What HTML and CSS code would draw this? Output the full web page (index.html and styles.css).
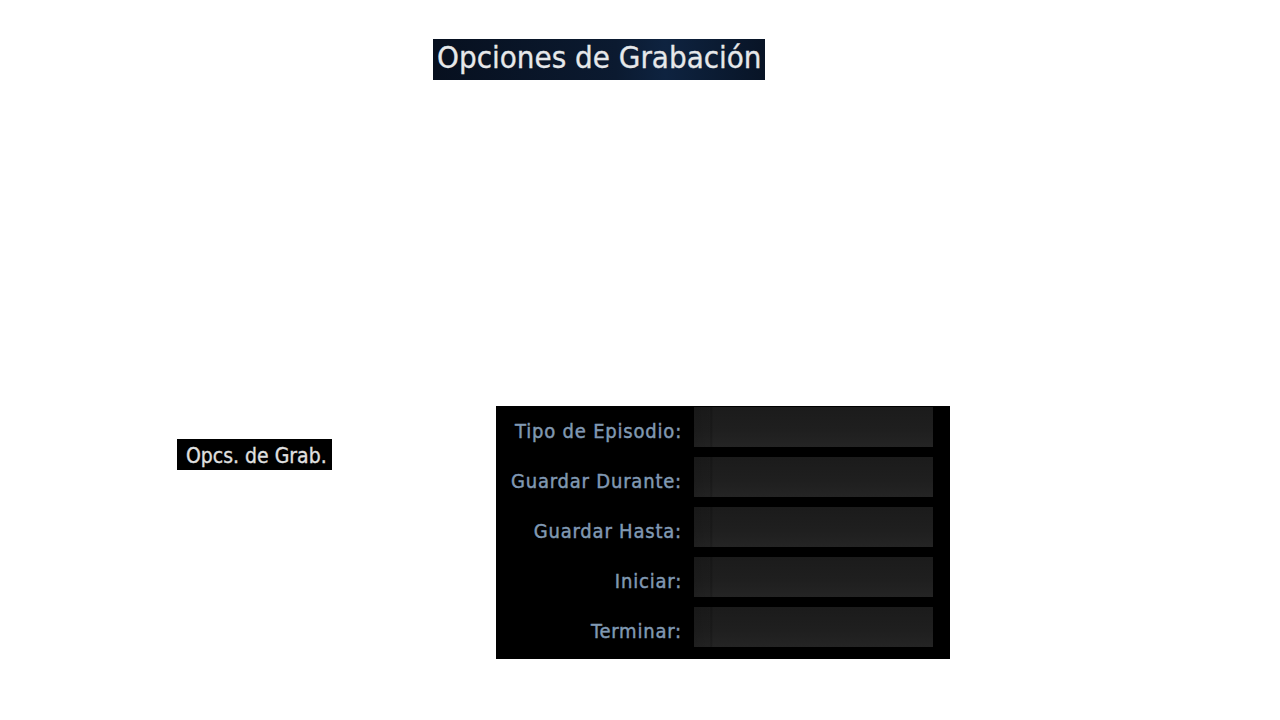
FILE: index.html
```html
<!DOCTYPE html>
<html lang="es">
<head>
<meta charset="utf-8">
<link rel="stylesheet" href="styles.css">
</head>
<body>
<div class="page">
  <div class="title-row">
    <div class="title">Opciones de Grabación</div>
  </div>
  <div class="bottom">
    <div class="short">Opcs. de Grab.</div>
    <div class="panel">
      <div class="row"><span class="label">Tipo de Episodio:</span><span class="field"></span></div>
      <div class="row"><span class="label">Guardar Durante:</span><span class="field"></span></div>
      <div class="row"><span class="label">Guardar Hasta:</span><span class="field"></span></div>
      <div class="row"><span class="label">Iniciar:</span><span class="field"></span></div>
      <div class="row"><span class="label">Terminar:</span><span class="field"></span></div>
    </div>
  </div>
</div>
</body>
</html>
```
FILE: styles.css
```css
html, body {
  margin: 0;
  padding: 0;
  background: #ffffff;
  width: 1280px;
  height: 720px;
  overflow: hidden;
  font-family: "DejaVu Sans", sans-serif;
  font-stretch: condensed;
}
.page {
  padding-top: 39px;
}
.title-row {
  padding-left: 433px;
}
.title {
  width: 332px;
  height: 41px;
  box-sizing: border-box;
  background: linear-gradient(90deg, #07101f 0%, #0b1a30 55%, #0e2340 70%, #081426 100%);
  color: #e6e8ea;
  font-size: 31px;
  line-height: 37px;
  padding-left: 4px;
  white-space: nowrap;
  -webkit-text-stroke: 0.3px #e6e8ea;
}
.bottom {
  display: flex;
  align-items: flex-start;
  margin-top: 326px;
  padding-left: 177px;
}
.short {
  margin-top: 33px;
  width: 155px;
  height: 31px;
  box-sizing: border-box;
  background: #000;
  color: #e0e0e0;
  font-size: 21px;
  line-height: 34px;
  padding-left: 9px;
  white-space: nowrap;
  -webkit-text-stroke: 0.3px #e0e0e0;
}
.panel {
  margin-left: 164px;
  width: 454px;
  height: 253px;
  background: #000;
  box-sizing: border-box;
  padding-top: 1px;
  display: flex;
  flex-direction: column;
  gap: 10px;
}
.row {
  display: flex;
  align-items: center;
  height: 40px;
}
.label {
  width: 198px;
  text-align: right;
  color: #8099b3;
  font-size: 20px;
  letter-spacing: 0.8px;
  -webkit-text-stroke: 0.45px #8099b3;
  padding-right: 12px;
  padding-top: 8px;
  box-sizing: border-box;
  white-space: nowrap;
}
.field {
  width: 239px;
  height: 40px;
  background:
    linear-gradient(90deg, rgba(0,0,0,0.12) 0px, rgba(0,0,0,0.05) 16px, rgba(0,0,0,0.25) 17px, rgba(0,0,0,0) 19px),
    linear-gradient(180deg, #1b1b1b 0%, #1f1f1f 60%, #242424 100%);
}
```
